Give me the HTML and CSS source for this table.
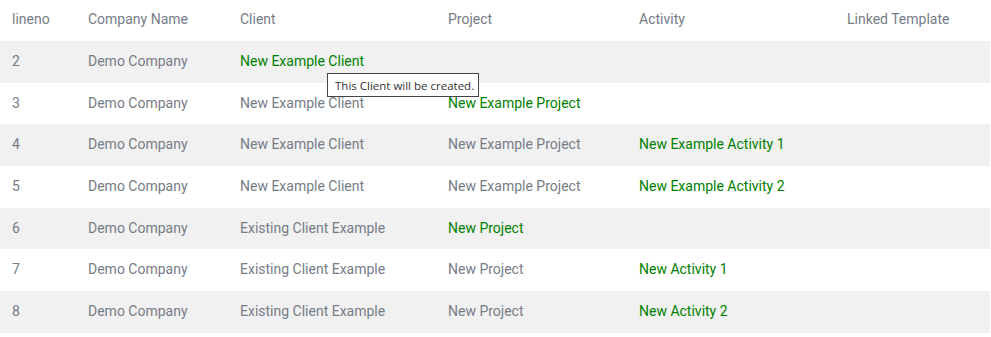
FILE: index.html
```html
<!DOCTYPE html>
<html>
<head>
<meta charset="utf-8">
<link rel="stylesheet" href="styles.css">
</head>
<body>
<div class="wrap">
<table class="grid">
  <colgroup>
    <col class="c1"><col class="c2"><col class="c3"><col class="c4"><col class="c5"><col class="c6">
  </colgroup>
  <thead>
    <tr><th>lineno</th><th>Company Name</th><th>Client</th><th>Project</th><th>Activity</th><th>Linked Template</th></tr>
  </thead>
  <tbody>
    <tr><td>2</td><td>Demo Company</td><td class="new">New Example Client</td><td></td><td></td><td></td></tr>
    <tr><td>3</td><td>Demo Company</td><td>New Example Client</td><td class="new">New Example Project</td><td></td><td></td></tr>
    <tr><td>4</td><td>Demo Company</td><td>New Example Client</td><td>New Example Project</td><td class="new">New Example Activity 1</td><td></td></tr>
    <tr><td>5</td><td>Demo Company</td><td>New Example Client</td><td>New Example Project</td><td class="new">New Example Activity 2</td><td></td></tr>
    <tr><td>6</td><td>Demo Company</td><td>Existing Client Example</td><td class="new">New Project</td><td></td><td></td></tr>
    <tr><td>7</td><td>Demo Company</td><td>Existing Client Example</td><td>New Project</td><td class="new">New Activity 1</td><td></td></tr>
    <tr><td>8</td><td>Demo Company</td><td>Existing Client Example</td><td>New Project</td><td class="new">New Activity 2</td><td></td></tr>
  </tbody>
</table>
<div class="tooltip">This Client will be created.</div>
</div>
</body>
</html>
```
FILE: styles.css
```css
html, body {
  margin: 0;
  padding: 0;
  background: #fff;
}
.wrap {
  position: relative;
  width: 991px;
}
.grid {
  width: 990px;
  border-collapse: collapse;
  table-layout: fixed;
  font-family: Roboto, "Liberation Sans", sans-serif;
  font-size: 14px;
  color: #767c87;
}
.c1 { width: 76px; }
.c2 { width: 152px; }
.c3 { width: 208px; }
.c4 { width: 191px; }
.c5 { width: 208px; }
.c6 { width: auto; }
.grid th {
  font-weight: normal;
  text-align: left;
  height: 41px;
  padding: 0 0 3px 12px;
  box-sizing: border-box;
  vertical-align: middle;
}
.grid td {
  height: 41.7px;
  padding: 0 0 2px 12px;
  box-sizing: border-box;
  vertical-align: middle;
  white-space: nowrap;
}
.grid tbody tr:nth-child(odd) {
  background: #f1f1f1;
}
.grid td.new {
  color: #008000;
}
.tooltip {
  position: absolute;
  left: 327px;
  top: 73px;
  width: 152px;
  height: 24px;
  box-sizing: border-box;
  border: 1px solid #444;
  background: #fff;
  font-family: "Open Sans", "Noto Sans", sans-serif;
  font-size: 11.5px;
  color: #333;
  line-height: 22px;
  padding: 1px 0 0 7px;
  white-space: nowrap;
}
```
